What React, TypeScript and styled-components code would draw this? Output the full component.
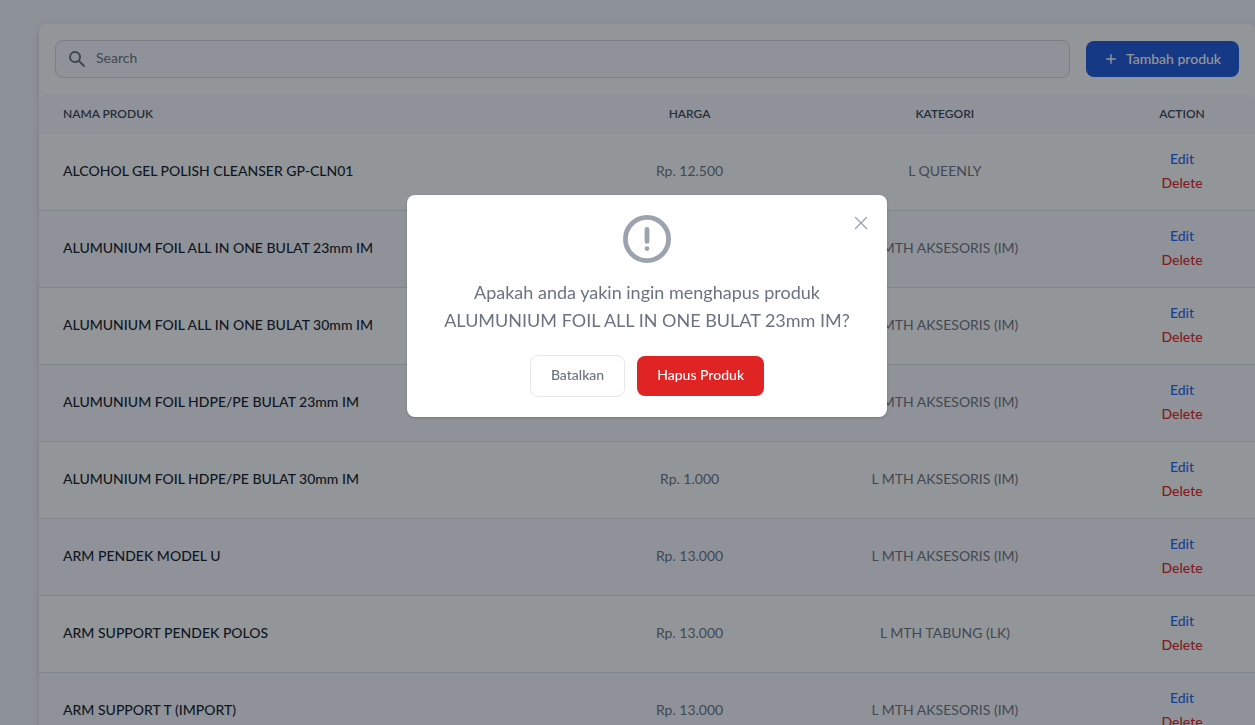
import React from 'react';
import styled, { createGlobalStyle } from 'styled-components';

const GlobalStyle = createGlobalStyle`
  *, *::before, *::after { box-sizing: border-box; }
  body {
    margin: 0;
    overflow: hidden;
    background: #f3f4fc;
    color: #6b7280;
    font: 400 14px/20px Lato, "Liberation Sans", sans-serif;
  }
  button, input { font: inherit; }
  button { cursor: pointer; }
`;

const Page = styled.main`
  height: 100vh;
  overflow: hidden;
  padding: 24px 0 0 39px;
`;

const Card = styled.section`
  background: #ffffff;
  border-radius: 8px;
  box-shadow: 0 4px 6px -1px rgba(0, 0, 0, 0.1), 0 2px 8px rgba(0, 0, 0, 0.08);
`;

const Toolbar = styled.div`
  display: flex;
  align-items: center;
  gap: 16px;
  padding: 16px;
`;

const SearchBox = styled.label`
  flex: 1;
  display: flex;
  align-items: center;
  gap: 9px;
  height: 38px;
  padding: 0 12px 0 11px;
  border: 1px solid #d1d5db;
  border-radius: 8px;
  background: #f8f9ff;
  color: #6b7280;
`;

const SearchInput = styled.input`
  flex: 1;
  min-width: 0;
  padding: 0 0 2px;
  border: 0;
  outline: 0;
  background: transparent;
  color: #111827;
  &::placeholder { color: #6b7280; opacity: 1; }
`;

const AddButton = styled.button`
  display: flex;
  align-items: center;
  justify-content: center;
  gap: 8px;
  min-width: 153px;
  height: 36px;
  padding: 0 16px;
  border: 0;
  border-radius: 8px;
  background: #1a56db;
  color: #ffffff;
  font-weight: 500;
  white-space: nowrap;
`;

const Table = styled.table`
  width: 100%;
  table-layout: fixed;
  border-collapse: separate;
  border-spacing: 0;
`;

type Align = 'left' | 'center';

const HeadCell = styled.th<{ $width: string; $align?: Align }>`
  width: ${(p) => p.$width};
  height: 40px;
  padding: 0 24px;
  background: #f8f9ff;
  color: #374151;
  font-size: 12px;
  font-weight: 600;
  line-height: 16px;
  text-align: ${(p) => p.$align ?? 'center'};
  text-transform: uppercase;
  &:first-child { border-top-left-radius: 8px; }
  &:last-child { border-top-right-radius: 8px; }
`;

const Row = styled.tr`
  background: #ffffff;
  &:nth-child(even) { background: #f8f9ff; }
`;

const Cell = styled.td`
  height: 77px;
  padding: 0 24px 2px;
  border-bottom: 1px solid #dfe2e7;
  text-align: center;
`;

const NameCell = styled.th`
  padding: 0 24px 2px;
  border-bottom: 1px solid #dfe2e7;
  color: #111827;
  font-weight: 500;
  text-align: left;
  white-space: nowrap;
`;

const Actions = styled.div`
  display: flex;
  flex-direction: column;
  align-items: center;
`;

const ActionButton = styled.button<{ $danger?: boolean }>`
  padding: 0;
  border: 0;
  background: none;
  color: ${(p) => (p.$danger ? '#e02424' : '#1c64f2')};
  font-weight: 500;
  line-height: 24px;
`;

const Overlay = styled.div`
  position: fixed;
  inset: 0;
  display: flex;
  align-items: flex-start;
  justify-content: center;
  padding: 195px 0 0 39px;
  background: rgba(15, 22, 28, 0.45);
`;

const Dialog = styled.div`
  position: relative;
  display: flex;
  flex-direction: column;
  align-items: center;
  width: 100%;
  max-width: 480px;
  padding: 20px;
  border-radius: 8px;
  background: #ffffff;
  box-shadow: 0 1px 3px rgba(0, 0, 0, 0.1), 0 1px 2px rgba(0, 0, 0, 0.1);
`;

const CloseButton = styled.button`
  position: absolute;
  top: 17px;
  right: 15px;
  display: flex;
  padding: 0;
  border: 0;
  background: none;
  color: #9ca3af;
`;

const DialogIcon = styled.svg`
  display: block;
  width: 48px;
  height: 48px;
  color: #9ca3af;
`;

const Question = styled.h3`
  margin: 15px 0 21px;
  color: #6b7280;
  font-size: 18px;
  font-weight: 400;
  line-height: 28px;
  text-align: center;
`;

const DialogButtons = styled.div`
  display: flex;
  align-items: center;
  gap: 12px;
`;

const DialogButton = styled.button<{ $danger?: boolean }>`
  padding: 9px 20px 11px;
  border: ${(p) => (p.$danger ? '0' : '1px solid #e5e7eb')};
  border-radius: 8px;
  background: ${(p) => (p.$danger ? '#e02424' : '#ffffff')};
  color: ${(p) => (p.$danger ? '#ffffff' : '#6b7280')};
  font-weight: 500;
`;

const products = [
  { name: 'ALCOHOL GEL POLISH CLEANSER GP-CLN01', price: 'Rp. 12.500', category: 'L QUEENLY' },
  { name: 'ALUMUNIUM FOIL ALL IN ONE BULAT 23mm IM', price: 'Rp. 1.000', category: 'L MTH AKSESORIS (IM)' },
  { name: 'ALUMUNIUM FOIL ALL IN ONE BULAT 30mm IM', price: 'Rp. 1.000', category: 'L MTH AKSESORIS (IM)' },
  { name: 'ALUMUNIUM FOIL HDPE/PE BULAT 23mm IM', price: 'Rp. 1.000', category: 'L MTH AKSESORIS (IM)' },
  { name: 'ALUMUNIUM FOIL HDPE/PE BULAT 30mm IM', price: 'Rp. 1.000', category: 'L MTH AKSESORIS (IM)' },
  { name: 'ARM PENDEK MODEL U', price: 'Rp. 13.000', category: 'L MTH AKSESORIS (IM)' },
  { name: 'ARM SUPPORT PENDEK POLOS', price: 'Rp. 13.000', category: 'L MTH TABUNG (LK)' },
  { name: 'ARM SUPPORT T (IMPORT)', price: 'Rp. 13.000', category: 'L MTH AKSESORIS (IM)' },
];

export default function App() {
  return (
    <>
      <GlobalStyle />
      <Page>
        <Card>
          <Toolbar>
            <SearchBox>
              <svg width="20" height="20" viewBox="0 0 20 20" fill="currentColor" aria-hidden="true">
                <path
                  fillRule="evenodd"
                  clipRule="evenodd"
                  d="M8 4a4 4 0 100 8 4 4 0 000-8zM2 8a6 6 0 1110.89 3.476l4.817 4.817a1 1 0 01-1.414 1.414l-4.816-4.816A6 6 0 012 8z"
                />
              </svg>
              <SearchInput type="text" placeholder="Search" aria-label="Search" />
            </SearchBox>
            <AddButton type="button">
              <svg width="14" height="14" viewBox="0 0 20 20" fill="currentColor" aria-hidden="true">
                <path
                  fillRule="evenodd"
                  clipRule="evenodd"
                  d="M10 3a1 1 0 011 1v5h5a1 1 0 110 2h-5v5a1 1 0 11-2 0v-5H4a1 1 0 110-2h5V4a1 1 0 011-1z"
                />
              </svg>
              Tambah produk
            </AddButton>
          </Toolbar>
          <Table>
            <thead>
              <tr>
                <HeadCell scope="col" $width="46%" $align="left">Nama produk</HeadCell>
                <HeadCell scope="col" $width="15%">Harga</HeadCell>
                <HeadCell scope="col" $width="27%">Kategori</HeadCell>
                <HeadCell scope="col" $width="12%">Action</HeadCell>
              </tr>
            </thead>
            <tbody>
              {products.map((product) => (
                <Row key={product.name}>
                  <NameCell scope="row">{product.name}</NameCell>
                  <Cell>{product.price}</Cell>
                  <Cell>{product.category}</Cell>
                  <Cell>
                    <Actions>
                      <ActionButton type="button">Edit</ActionButton>
                      <ActionButton type="button" $danger>Delete</ActionButton>
                    </Actions>
                  </Cell>
                </Row>
              ))}
            </tbody>
          </Table>
        </Card>
      </Page>
      <Overlay>
        <Dialog role="dialog" aria-modal="true" aria-labelledby="delete-question">
          <CloseButton type="button" aria-label="Tutup">
            <svg width="22" height="22" viewBox="0 0 24 24" fill="none" stroke="currentColor" strokeWidth="1.5" strokeLinecap="round" aria-hidden="true">
              <path d="M6 18L18 6M6 6l12 12" />
            </svg>
          </CloseButton>
          <DialogIcon viewBox="0 0 20 20" fill="none" stroke="currentColor" strokeWidth="2" strokeLinecap="round" aria-hidden="true">
            <path d="M10 11V6m0 8h.01M19 10a9 9 0 1 1-18 0 9 9 0 0 1 18 0Z" />
          </DialogIcon>
          <Question id="delete-question">
            Apakah anda yakin ingin menghapus produk ALUMUNIUM FOIL ALL IN ONE BULAT 23mm IM?
          </Question>
          <DialogButtons>
            <DialogButton type="button">Batalkan</DialogButton>
            <DialogButton type="button" $danger>Hapus Produk</DialogButton>
          </DialogButtons>
        </Dialog>
      </Overlay>
    </>
  );
}
